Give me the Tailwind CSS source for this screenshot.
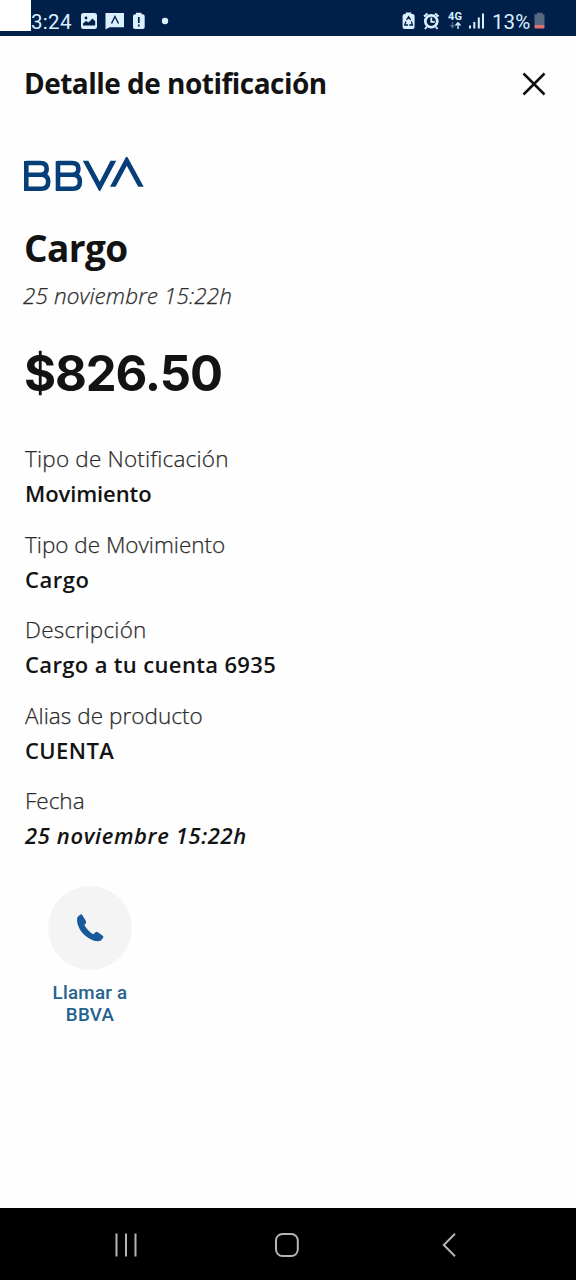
<!DOCTYPE html>
<html lang="es">
<head>
<meta charset="utf-8">
<title>Detalle de notificación</title>
<script src="https://cdn.jsdelivr.net/npm/@tailwindcss/browser@4"></script>
</head>
<body class="flex h-[1280px] w-[576px] flex-col overflow-hidden bg-[#fefefe] font-['Open_Sans',sans-serif] text-[#131313]">
  <!-- Status bar -->
  <div class="flex h-9 shrink-0 items-start bg-[#00204a] text-[#dcefff]">
    <div class="h-[31px] w-[31px] bg-white"></div>
    <span class="mt-[9px] w-[48px] font-['Roboto',sans-serif] text-[20.5px] leading-[26px] tracking-[0.3px]">3:24</span>
    <svg class="mt-3 h-[18px] w-[90px]" viewBox="79 12 90 18">
      <rect x="81" y="13" width="16" height="16" rx="2.5" fill="#dcefff"/>
      <circle cx="86" cy="18" r="1.4" fill="#00204a"/>
      <path d="M83 25.5v-2l3-2.5 2.5 1.5 4-4 2.7 2.7v4.3z" fill="#00204a"/>
      <path d="M105.500 13H124V27.300H109.500L105.500 29.500z" fill="#dcefff"/>
      <path d="M111.500 23.500L115 16.500L118.500 23.500" fill="none" stroke="#00204a" stroke-width="1.4"/>
      <path d="M136 12.800h5.500v1.400h1.200a2 2 0 0 1 2 2V27a2 2 0 0 1-2 2h-7.700a2 2 0 0 1-2-2V16.200a2 2 0 0 1 2-2h1z" fill="#dcefff"/>
      <path d="M138.800 17v6M138.800 24.500v2" stroke="#00204a" stroke-width="1.7"/>
      <circle cx="165" cy="21" r="3.200" fill="#dcefff"/>
    </svg>
    <svg class="mt-[9px] ml-auto h-[22px] w-[46px]" viewBox="400 9 46 22">
      <path d="M405.700 12.500h5.600v1.600h1.300a2 2 0 0 1 2 2V27a2 2 0 0 1-2 2h-8a2 2 0 0 1-2-2V16.100a2 2 0 0 1 2-2h1.100z" fill="#dcefff"/>
      <path d="M406.500 20l2.100-3.200 2.100 3.200M411.300 21.500l1.200 3.500h-3.300M408 25h-3.300l1.200-3.500" fill="none" stroke="#00204a" stroke-width="1.300"/>
      <circle cx="431.300" cy="21.300" r="7.300" fill="#dcefff"/>
      <path d="M424 16.500l3.500-3M438.600 16.500l-3.500-3M426.500 27l-1.500 2M436 27l1.500 2" stroke="#dcefff" stroke-width="2"/>
      <circle cx="431.300" cy="21.300" r="4.600" fill="#00204a"/>
      <path d="M431.300 17.500v4.300h3.500" fill="none" stroke="#dcefff" stroke-width="1.800"/>
    </svg>
    <div class="mt-3 mr-[4px] flex w-[18px] flex-col items-center">
      <span class="font-['Roboto',sans-serif] text-[11px] leading-[9px] font-bold">4G</span>
      <svg class="h-[9px] w-[14px]" viewBox="0 0 14 9" fill="none"><path d="M4.500 1v5M2.500 4l2 2.500 2-2.500" stroke="#60799a" stroke-width="1.200"/><path d="M10 8V2M7.500 4.500L10 1.800 12.500 4.500" stroke="#dcefff" stroke-width="1.400"/></svg>
    </div>
    <svg class="mt-3 h-[18px] w-[18px]" viewBox="468 12 18 18" fill="#dcefff"><path d="M469 25.500h2v3h-2zM473.300 22h2v6.500h-2zM477.800 17.500h2v11h-2zM482 13.500h2v15h-2z"/></svg>
    <span class="mt-[9px] ml-[6px] w-[42px] font-['Roboto',sans-serif] text-[20.500px] leading-[26px] tracking-[0.100px] whitespace-nowrap">13%</span>
    <svg class="mt-3 mr-[30px] h-[18px] w-[12px]" viewBox="534 12 12 18"><path d="M537 12.800h5.500v1.500h2v10.700h-10V14.300h2.500z" fill="#56687f"/><path d="M534.500 25h10v2.500a1 1 0 0 1-1 1h-8a1 1 0 0 1-1-1z" fill="#e0706f"/></svg>
  </div>

  <!-- Header -->
  <header class="flex h-24 shrink-0 items-center justify-between pr-[30px] pl-6">
    <h1 class="pb-[3px] text-[28px] leading-10 font-bold tracking-[-0.520px] whitespace-nowrap">Detalle de notificación</h1>
    <svg class="h-6 w-6" viewBox="0 0 24 24" fill="none" stroke="#111" stroke-width="2.500"><path d="M1.500 1.500L22.500 22.500M22.500 1.500L1.500 22.500"/></svg>
  </header>

  <main class="flex grow flex-col px-6 pt-6">
    <!-- Logo -->
    <svg class="h-9 w-[120px]" role="img" aria-label="BBVA" viewBox="24 156 120 36" fill="none" stroke="#063f78" stroke-width="4.600">
      <path d="M26.300 163H40.500Q46.700 163 46.700 168.800Q46.700 174.800 40.500 174.800H26.300M41 174.800Q48.200 174.800 48.200 181.700Q48.200 188.700 41 188.700H26.300V161"/>
      <path d="M58 163H72.200Q78.400 163 78.400 168.800Q78.400 174.800 72.200 174.800H58M72.700 174.800Q79.900 174.800 79.900 181.700Q79.900 188.700 72.700 188.700H58V161"/>
      <path d="M82.800 160.800H88.300L99.700 181.800L110.500 160.800H116.200L100.500 190.600Q99.700 191.700 98.800 190.600zM110 186.700L125.700 157.400Q126.700 156 127.700 157.400L143.700 186.700H138.200L126.800 165.700L115.600 186.700z" fill="#063f78" stroke="none"/>
    </svg>

    <h2 class="mt-[34px] text-[37px] leading-[44px] font-bold tracking-[-0.600px]">Cargo</h2>
    <p class="mt-[10px] -ml-px text-[22.500px] leading-8 font-light tracking-[0.120px] text-[#2b2b2b] italic [-webkit-text-stroke:0.250px_#2b2b2b]">25 noviembre 15:22h</p>
    <p class="mt-8 font-['Inter',sans-serif] text-[49px] leading-[60px] font-bold tracking-[-1.100px]">$826.50</p>

    <dl class="mt-[37px] flex flex-col gap-[15.600px] pl-px text-[22px] leading-[35px] [&_dt]:text-[22.500px] [&_dt]:font-light [&_dt]:text-[#2b2b2b] [&_dt]:[-webkit-text-stroke:0.250px_#2b2b2b] [&_dd]:font-semibold">
      <div><dt class="tracking-[0.200px]">Tipo de Notificación</dt><dd class="tracking-[-0.100px]">Movimiento</dd></div>
      <div><dt>Tipo de Movimiento</dt><dd class="tracking-[0.500px]">Cargo</dd></div>
      <div><dt class="tracking-[0.250px]">Descripción</dt><dd class="tracking-[0.350px]">Cargo a tu cuenta 6935</dd></div>
      <div><dt class="tracking-[0.050px]">Alias de producto</dt><dd class="tracking-[0.400px]">CUENTA</dd></div>
      <div><dt>Fecha</dt><dd class="tracking-[0.620px] italic">25 noviembre 15:22h</dd></div>
    </dl>

    <!-- Call action -->
    <div class="mt-[33px] ml-6 flex w-[84px] flex-col items-center text-center text-[#24638f]">
      <div class="flex h-[84px] w-[84px] items-center justify-center rounded-full bg-[#f4f4f4]">
        <svg class="h-7 w-7" viewBox="76 914 28 28" fill="#17599a"><path d="M80.500 914.500L77.500 917C75.800 922 79 930 85 935.500C91 940.500 97.500 942.500 101 940.500L103.300 937.500Q103.600 936.500 102.700 935.800L97.500 932Q96.200 931.400 95.300 932.500L93.500 934.300C91 933.500 85.500 928 84.500 925L85.800 923.200Q86.500 922.200 85.800 921L82.300 914.900Q81.500 913.800 80.500 914.500z"/></svg>
      </div>
      <p class="mt-[12px] font-['Roboto',sans-serif] text-[18.700px] leading-[22px] font-medium tracking-[0.300px]">Llamar a<br>BBVA</p>
    </div>
  </main>

  <!-- Navigation bar -->
  <nav class="flex h-[72px] shrink-0 items-center bg-black pt-[2px] pl-[114px]">
    <svg class="h-6 w-6" viewBox="0 0 24 24" stroke="#b5b5b5" stroke-width="2"><path d="M2.500 0.500v23M12 0.500v23M21.500 0.500v23"/></svg>
    <svg class="ml-[137px] h-6 w-6" viewBox="0 0 24 24" fill="none" stroke="#b5b5b5" stroke-width="2"><rect x="1" y="1" width="21.800" height="22" rx="6.500"/></svg>
    <svg class="ml-[143px] h-6 w-[14px]" viewBox="0 0 14 24" fill="none" stroke="#b5b5b5" stroke-width="2"><path d="M13 0.700L1.800 12 13 23.300"/></svg>
  </nav>
</body>
</html>
